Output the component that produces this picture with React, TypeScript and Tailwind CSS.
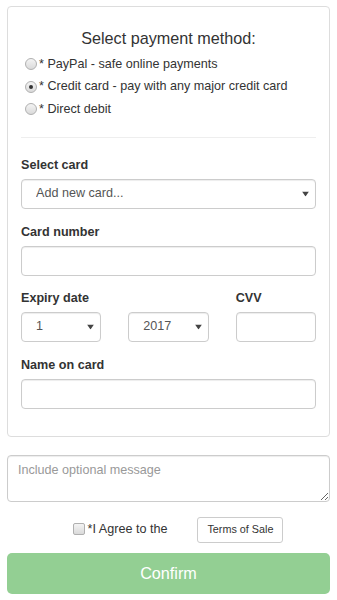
import { useState } from "react";

const months = Array.from({ length: 12 }, (_, i) => String(i + 1));
const years = ["2017", "2018", "2019", "2020", "2021", "2022"];

const methods = [
  { id: "paypal", label: "* PayPal - safe online payments" },
  { id: "card", label: "* Credit card - pay with any major credit card" },
  { id: "debit", label: "* Direct debit" },
];

const Caret = () => (
  <svg
    className="pointer-events-none absolute right-[7px] top-1/2 -translate-y-1/2"
    width="7"
    height="5"
    viewBox="0 0 7 5"
  >
    <path d="M0 0h7L3.5 5z" fill="#444" />
  </svg>
);

const Select = ({ options, value }: { options: string[]; value: string }) => (
  <div className="relative">
    <select
      defaultValue={value}
      className="h-[30px] w-full appearance-none rounded-[4px] border border-[#ccc] bg-white pl-[14px] pr-6 text-[12.6px] text-[#555] shadow-[inset_0_1px_1px_rgba(0,0,0,0.075)] outline-none"
    >
      {options.map((o) => (
        <option key={o}>{o}</option>
      ))}
    </select>
    <Caret />
  </div>
);

const Input = () => (
  <input
    type="text"
    className="block h-[30px] w-full rounded-[4px] border border-[#ccc] bg-white px-3 text-[12.6px] text-[#555] shadow-[inset_0_1px_1px_rgba(0,0,0,0.075)] outline-none"
  />
);

const Label = ({ children }: { children: React.ReactNode }) => (
  <div className="mb-[5px] text-[12.6px] font-bold leading-[18px] text-[#333]">{children}</div>
);

export default function App() {
  const [method, setMethod] = useState("card");
  const [agree, setAgree] = useState(false);

  return (
    <div
      className="min-h-[600px] bg-white px-[7px] pt-[6px] text-[#333]"
      style={{ fontFamily: '"Liberation Sans", Arial, sans-serif' }}
    >
      {/* Payment panel */}
      <div className="rounded-[4px] border border-[#ddd] px-[13px] pt-[22px] pb-[27px]">
        <h2 className="text-center text-[16.2px] leading-[18px]">Select payment method:</h2>

        <div className="mt-[6px] flex flex-col">
          {methods.map((m) => (
            <label
              key={m.id}
              className="flex h-[22.5px] cursor-pointer items-center gap-[2px] pl-[4px] text-[12.6px]"
              onClick={() => setMethod(m.id)}
            >
              <span className="flex h-[12px] w-[12px] items-center justify-center rounded-full border border-[#b0b0b0] bg-gradient-to-b from-[#f4f4f4] to-[#dadada]">
                {method === m.id && <span className="h-[4px] w-[4px] rounded-full bg-[#333]" />}
              </span>
              <span>{m.label}</span>
            </label>
          ))}
        </div>

        <hr className="mt-[16px] border-t border-[#eee]" />

        <div className="mt-[18px]">
          <Label>Select card</Label>
          <Select options={["Add new card..."]} value="Add new card..." />
        </div>

        <div className="mt-[14px]">
          <Label>Card number</Label>
          <Input />
        </div>

        <div className="mt-[13px] grid grid-cols-3 gap-x-[27px]">
          <div className="col-span-2">
            <Label>Expiry date</Label>
          </div>
          <div>
            <Label>CVV</Label>
          </div>
          <Select options={months} value="1" />
          <Select options={years} value="2017" />
          <Input />
        </div>

        <div className="mt-[14px]">
          <Label>Name on card</Label>
          <Input />
        </div>
      </div>

      {/* Message */}
      <textarea
        placeholder="Include optional message"
        className="mt-[18px] block h-[47px] w-full rounded-[4px] border border-[#ccc] px-[10px] py-[5px] text-[12.6px] leading-[18px] text-[#555] shadow-[inset_0_1px_1px_rgba(0,0,0,0.075)] outline-none placeholder:text-[#999]"
      />

      {/* Agree */}
      <div className="mt-[15px] flex items-center justify-center pl-[19px]">
        <label className="flex cursor-pointer items-center gap-[3px] text-[12.6px]" onClick={() => setAgree(!agree)}>
          <span className="flex h-[12px] w-[12px] items-center justify-center rounded-[2px] border border-[#b0b0b0] bg-gradient-to-b from-[#f4f4f4] to-[#dadada] text-[9px] leading-none">
            {agree ? "✓" : ""}
          </span>
          <span>*I Agree to the</span>
        </label>
        <button className="ml-[30px] h-[26px] w-[86px] rounded-[3px] border border-[#ccc] bg-white text-[10.8px] text-[#333]">
          Terms of Sale
        </button>
      </div>

      {/* Confirm */}
      <button
        disabled={!agree}
        className="mt-[10px] h-[41px] w-full rounded-[5px] bg-[#5cb85c] text-[16.2px] text-white disabled:bg-[#93cf93]"
      >
        Confirm
      </button>
    </div>
  );
}
